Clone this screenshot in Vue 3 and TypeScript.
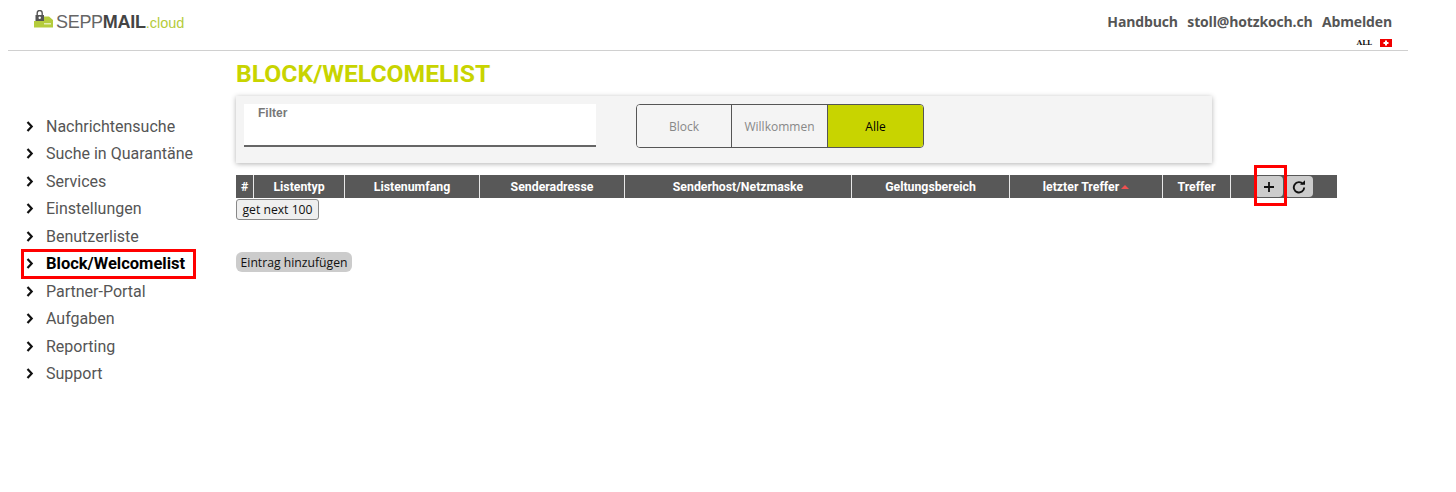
<template>
  <div class="page">
    <header class="top">
      <div class="logo">
        <svg class="logo-icon" width="19" height="18" viewBox="0 0 19 18">
          <path d="M3.200 6V3a2.500 2.500 0 0 1 5 0V6" fill="none" stroke="#555" stroke-width="1.400" />
          <path d="M0 11h10V6.500h5L19 10v7.500H0z" fill="#b5cc3c" />
          <rect x="1.500" y="5" width="8.500" height="6" fill="#555" />
          <circle cx="5.700" cy="7.800" r="1.200" fill="#fff" />
          <rect x="10" y="13" width="7" height="1.500" fill="#e4edb4" />
        </svg>
        <span class="logo-text">SEPP<b>MAIL</b><span class="logo-tld">.cloud</span></span>
      </div>
      <div class="top-right">
        <div class="top-links">
          <a>Handbuch</a>
          <a>stoll@hotzkoch.ch</a>
          <a>Abmelden</a>
        </div>
        <div class="lang">
          <span>ALL</span>
          <svg width="12" height="8" viewBox="0 0 12 8">
            <rect width="12" height="8" fill="#f00000" />
            <path d="M5 1.500h2v1.500h1.500v2H7v1.500H5V5H3.500V3H5z" fill="#fff" />
          </svg>
        </div>
      </div>
    </header>

    <div class="body">
      <nav class="side">
        <a v-for="item in navItems" :key="item" class="nav-item" :class="{ active: item === 'Block/Welcomelist' }">
          <svg class="chev" width="8" height="11" viewBox="0 0 8 11">
            <path d="M1.500 1l4.200 4.500-4.200 4.500" fill="none" stroke="#111" stroke-width="2.200" />
          </svg>
          {{ item }}
        </a>
      </nav>

      <main class="main">
        <h1>BLOCK/WELCOMELIST</h1>

        <section class="filter-panel">
          <div class="filter-input">
            <label>Filter</label>
          </div>
          <div class="segments">
            <button v-for="s in segments" :key="s" class="segment" :class="{ on: s === 'Alle' }">{{ s }}</button>
          </div>
        </section>

        <table class="list">
          <thead>
            <tr>
              <th v-for="col in columns" :key="col.label" :style="{ width: col.width + 'px' }">
                {{ col.label }}<span v-if="col.sorted" class="sort"></span>
              </th>
              <th class="actions">
                <div class="action-btns">
                  <button class="act add">
                    <svg width="12" height="12" viewBox="0 0 12 12">
                      <path d="M6 1v10M1 6h10" stroke="#111" stroke-width="1.800" />
                    </svg>
                  </button>
                  <button class="act">
                    <svg width="14" height="14" viewBox="0 0 14 14">
                      <path d="M11 4A5.200 5.200 0 1 0 12.200 7.500" fill="none" stroke="#111" stroke-width="1.900" />
                      <path d="M8 4.800h5V.3z" fill="#111" />
                    </svg>
                  </button>
                </div>
                <span class="mark"></span>
              </th>
            </tr>
          </thead>
        </table>

        <button class="next">get next 100</button>
        <button class="add-entry">Eintrag hinzufügen</button>
      </main>
    </div>
  </div>
</template>

<script setup lang="ts">
const navItems: string[] = [
  'Nachrichtensuche',
  'Suche in Quarantäne',
  'Services',
  'Einstellungen',
  'Benutzerliste',
  'Block/Welcomelist',
  'Partner-Portal',
  'Aufgaben',
  'Reporting',
  'Support',
]

const segments: string[] = ['Block', 'Willkommen', 'Alle']

const columns: { label: string; width: number; sorted?: boolean }[] = [
  { label: '#', width: 17 },
  { label: 'Listentyp', width: 91 },
  { label: 'Listenumfang', width: 135 },
  { label: 'Senderadresse', width: 145 },
  { label: 'Senderhost/Netzmaske', width: 227 },
  { label: 'Geltungsbereich', width: 158 },
  { label: 'letzter Treffer', width: 153, sorted: true },
  { label: 'Treffer', width: 68 },
]
</script>

<style>
html,
body {
  background: #fff;
}
</style>

<style scoped>
.page {
  width: 1456px;
  height: 492px;
  overflow: hidden;
  font-family: Roboto, sans-serif;
}

.top {
  width: 1400px;
  height: 50px;
  margin-left: 8px;
  border-bottom: 1px solid #d0d0d0;
  display: flex;
  justify-content: space-between;
}

.logo {
  display: flex;
  align-items: flex-start;
  padding: 10px 0 0 26px;
  gap: 3px;
}

.logo-icon {
  display: block;
}

.logo-text {
  font-family: 'Liberation Sans', sans-serif;
  font-size: 18px;
  line-height: 24px;
  color: #666;
  letter-spacing: -0.3px;
}

.logo-text b {
  color: #444;
}

.logo-tld {
  color: #b5cc3c;
  font-size: 14.500px;
  letter-spacing: 0;
}

.top-right {
  padding: 12px 16px 0 0;
  display: flex;
  flex-direction: column;
  align-items: flex-end;
}

.top-links {
  display: flex;
  gap: 9.500px;
  font-family: 'Open Sans', sans-serif;
  font-size: 14px;
  font-weight: bold;
  line-height: 20px;
  letter-spacing: -0.15px;
  color: #555;
}

.lang {
  display: flex;
  align-items: center;
  gap: 8px;
  margin-top: 6px;
  font-family: 'DejaVu Serif', serif;
  font-size: 7px;
  font-weight: bold;
  line-height: 9px;
  color: #111;
}

.body {
  display: flex;
}

.side {
  width: 236px;
  flex-shrink: 0;
  padding-top: 61.400px;
  padding-left: 21px;
  box-sizing: border-box;
  display: flex;
  flex-direction: column;
}

.nav-item {
  height: 27.500px;
  width: 175px;
  box-sizing: border-box;
  display: flex;
  align-items: center;
  gap: 12px;
  padding-left: 5px;
  font-size: 16px;
  color: #555;
  white-space: nowrap;
}

.nav-item.active {
  height: 30px;
  margin: -1.400px 0 -1.100px;
  border: 3px solid #f00;
  padding-left: 2px;
  font-size: 16.500px;
  font-weight: bold;
  color: #000;
}

.chev {
  flex-shrink: 0;
}

.main {
  flex: 1;
  position: relative;
}

h1 {
  margin: 9px 0 0;
  font-size: 24.700px;
  line-height: 28px;
  font-weight: bold;
  color: #c8d400;
}

.filter-panel {
  width: 976px;
  height: 67px;
  margin-top: 8px;
  background: #f4f4f4;
  box-shadow: 0 1px 5px rgba(0, 0, 0, 0.3);
  display: flex;
  padding: 8px;
  box-sizing: border-box;
}

.filter-input {
  width: 352px;
  height: 43px;
  background: #fff;
  border-bottom: 2px solid #666;
  box-sizing: border-box;
  padding: 2px 14px;
}

.filter-input label {
  font-family: 'Liberation Sans', sans-serif;
  font-size: 12px;
  line-height: 14px;
  font-weight: bold;
  color: #777;
  display: block;
}

.segments {
  display: flex;
  margin-left: 40px;
  height: 44px;
  width: 288px;
  border: 1px solid #555;
  border-radius: 4px;
  box-sizing: border-box;
  overflow: hidden;
}

.segment {
  width: 96px;
  border: 0;
  border-left: 1px solid #555;
  background: #f4f4f4;
  font-family: 'Open Sans', sans-serif;
  font-size: 12px;
  color: #888;
  padding: 0;
}

.segment:first-child {
  width: 94px;
  border-left: 0;
}

.segment.on {
  background: #c8d400;
  color: #000;
}

.list {
  width: 1101px;
  margin-top: 12px;
  border-collapse: collapse;
  table-layout: fixed;
  background: #585858;
}

.list th {
  height: 23px;
  padding: 0 0 0 1px;
  border-left: 1px solid #e8e8e8;
  font-family: Roboto, sans-serif;
  font-size: 12.300px;
  font-weight: 700;
  color: #fff;
  text-align: center;
  box-sizing: border-box;
}

.list th:first-child {
  border-left: 0;
}

.sort {
  display: inline-block;
  margin-left: 2px;
  margin-bottom: 2px;
  border-left: 4px solid transparent;
  border-right: 4px solid transparent;
  border-bottom: 4px solid #f05050;
}

.list th.actions {
  position: relative;
  padding: 0;
}

.action-btns {
  display: flex;
  gap: 2px;
  padding-left: 24px;
}

.act {
  width: 28px;
  height: 21px;
  padding: 0;
  border: 0;
  border-radius: 4px;
  background: #ccc;
  display: flex;
  align-items: center;
  justify-content: center;
}

.mark {
  position: absolute;
  left: 23px;
  top: -10px;
  width: 33px;
  height: 41px;
  border: 3px solid #f00;
  box-sizing: border-box;
  pointer-events: none;
}

.next {
  display: block;
  width: 83px;
  height: 21px;
  margin-top: 1px;
  padding: 0;
  background: #efefef;
  border: 1px solid #888;
  border-radius: 3px;
  font-family: 'Open Sans', sans-serif;
  font-size: 12.200px;
  color: #111;
}

.add-entry {
  display: block;
  width: 116px;
  height: 20px;
  margin-top: 32px;
  padding: 0;
  background: #ccc;
  border: 0;
  border-radius: 6px;
  font-family: 'Open Sans', sans-serif;
  font-size: 12.200px;
  color: #111;
}
</style>
